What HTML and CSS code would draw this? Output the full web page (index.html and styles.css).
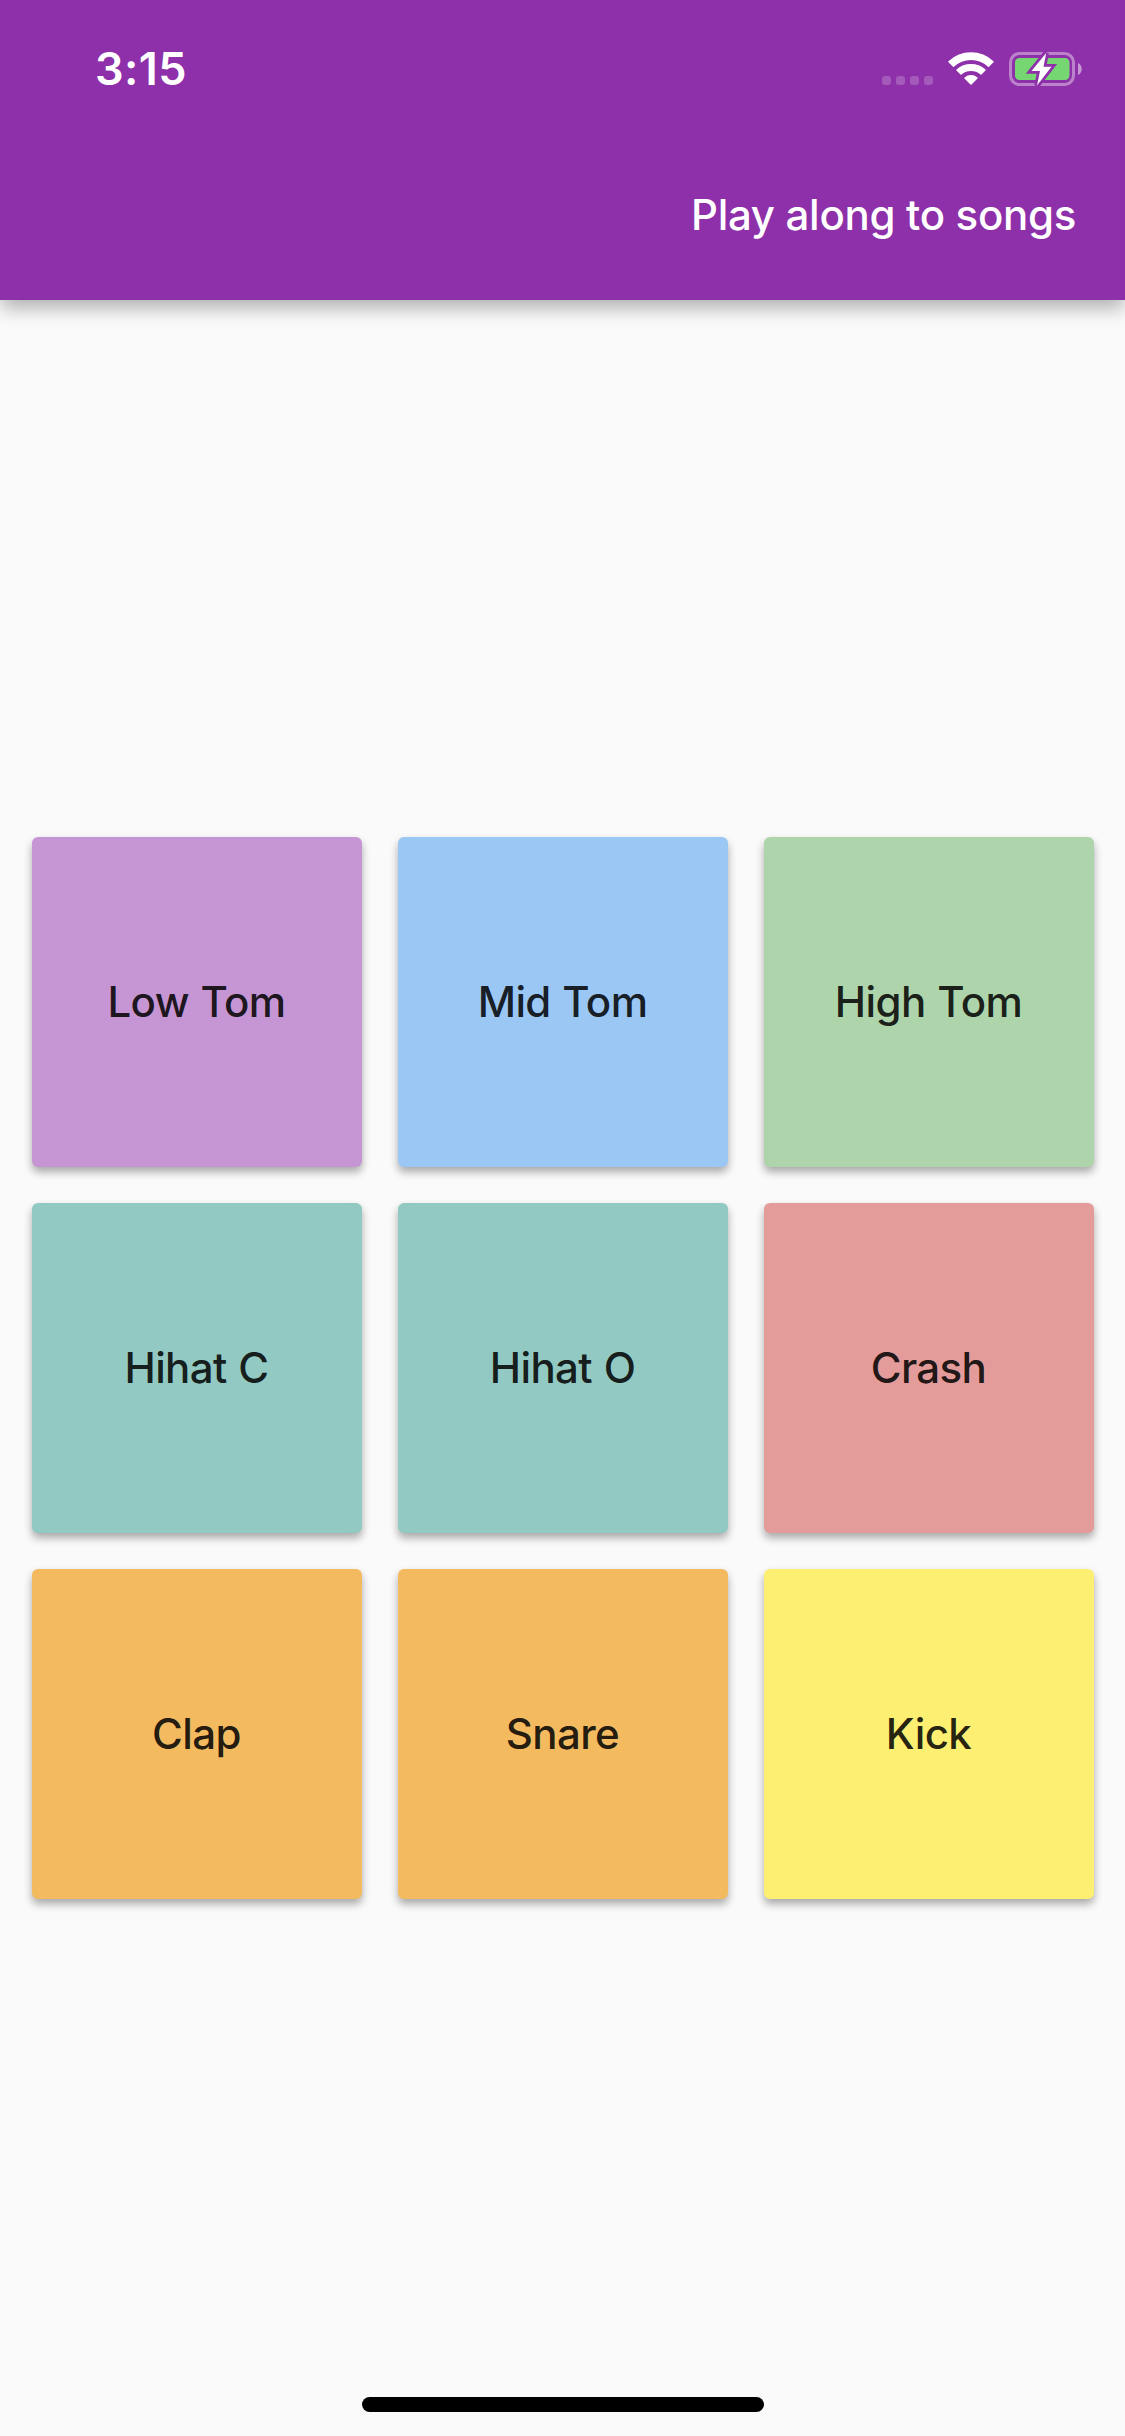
FILE: index.html
```html
<!DOCTYPE html>
<html lang="en">
<head>
<meta charset="utf-8">
<title>Drum pads</title>
<link rel="stylesheet" href="styles.css">
</head>
<body>
<div class="screen">
  <header class="app-bar">
    <div class="status-bar">
      <time class="clock">3:15</time>
      <div class="indicators">
        <svg class="signal" width="51" height="9" viewBox="0 0 51 9"><rect width="9" height="9" rx="3"/><rect x="14" width="9" height="9" rx="3"/><rect x="28" width="9" height="9" rx="3"/><rect x="42" width="9" height="9" rx="3"/></svg>
        <svg class="wifi" width="46" height="34" viewBox="0 0 46 34"><path d="M1 9.700A32 32 0 0 1 45 9.700L40.500 14.200A25.500 25.500 0 0 0 5.500 14.200Z"/><path d="M9 18A21.300 21.300 0 0 1 37 18L33 22A15.500 15.500 0 0 0 13 22Z"/><path d="M17 26A9.500 9.500 0 0 1 29 26L23 32Z"/></svg>
        <svg class="battery" width="73" height="34" viewBox="0 0 73 34"><rect class="case" x="1.500" y="1.500" width="63" height="31" rx="9"/><path class="cap" d="M69 11C74 13 74 21 69 23z"/><rect class="charge" x="6" y="6" width="54.500" height="22" rx="4.500"/><path class="bolt" d="M37.200 1L22.500 19H31L28 33.500L42.500 14.700H34.500Z"/></svg>
      </div>
    </div>
    <div class="toolbar"><button class="action">Play along to songs</button></div>
  </header>
  <main class="pads">
    <button class="pad purple">Low Tom</button>
    <button class="pad blue">Mid Tom</button>
    <button class="pad green">High Tom</button>
    <button class="pad teal">Hihat C</button>
    <button class="pad teal">Hihat O</button>
    <button class="pad red">Crash</button>
    <button class="pad orange">Clap</button>
    <button class="pad orange">Snare</button>
    <button class="pad yellow">Kick</button>
  </main>
  <footer class="home-area"><div class="home-indicator"></div></footer>
</div>
</body>
</html>
```
FILE: styles.css
```css
* { box-sizing: border-box; }
body { margin: 0; font-family: Inter, "Liberation Sans", sans-serif; }
button { border: 0; padding: 0; margin: 0; background: none; font: inherit; white-space: nowrap; }
.screen { width: 1125px; height: 2436px; background: #fafafa; display: flex; flex-direction: column; }
.app-bar { height: 300px; background: #8e30a9; color: #fff; box-shadow: 0 9px 18px -1px rgba(0,0,0,.3); display: flex; flex-direction: column; flex-shrink: 0; }
.status-bar { height: 132px; padding: 43px 43px 0 95px; display: flex; justify-content: space-between; align-items: flex-start; }
.clock { font-size: 45px; line-height: 52px; font-weight: 600; letter-spacing: .4px; }
.indicators { display: flex; align-items: flex-start; gap: 15px; padding-top: 9px; }
.signal { margin-top: 24px; fill: #fff; opacity: .2; }
.wifi { fill: #fff; stroke: #fff; stroke-width: 1.5; stroke-linejoin: round; }
.battery { overflow: visible; }
.case { fill: none; stroke: #fff; stroke-opacity: .4; stroke-width: 3; }
.cap { fill: #fff; fill-opacity: .5; }
.charge { fill: #76d672; }
.bolt { fill: #fff; stroke: #8e30a9; stroke-width: 5.500; paint-order: stroke; }
.toolbar { height: 168px; display: flex; justify-content: flex-end; align-items: center; padding: 0 49px 4px 0; }
.action { color: #fff; font-size: 42px; font-weight: 500; letter-spacing: -.3px; }
.pads { flex: 1; display: grid; grid-template-columns: repeat(3, 330px); grid-auto-rows: 330px; gap: 36px; justify-content: center; align-content: center; }
.pad { border-radius: 6px; padding-bottom: 2px; font-size: 42px; font-weight: 450; letter-spacing: -.6px; word-spacing: 1px; color: rgba(0,0,0,.87); box-shadow: 0 5px 8px rgba(0,0,0,.33); }
.purple { background: #c695d3; }
.blue { background: #9bc7f5; }
.green { background: #aed4ab; }
.teal { background: #92c9c2; }
.red { background: #e39c9a; }
.orange { background: #f3ba60; }
.yellow { background: #fcef72; }
.home-area { height: 102px; margin-top: -102px; display: flex; justify-content: center; padding-top: 63px; }
.home-indicator { width: 402px; height: 15px; border-radius: 8px; background: #000; }
```
